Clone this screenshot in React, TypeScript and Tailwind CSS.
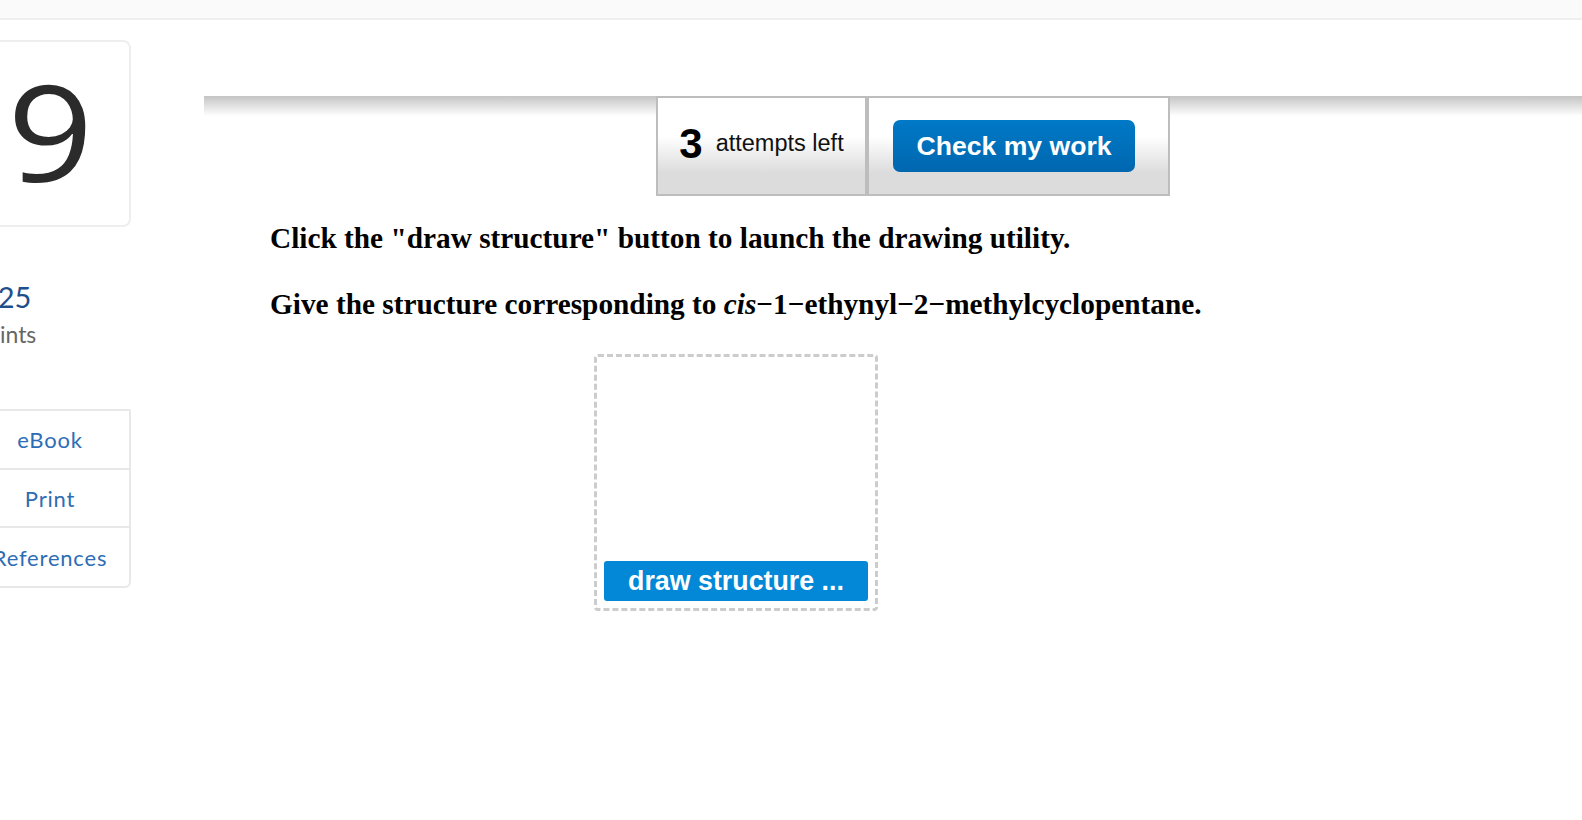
import React from "react";

export default function App() {
  return (
    <div className="relative w-full h-[820px] overflow-hidden bg-white">
      <div className="h-[20px] bg-[#fafafa] border-b-2 border-[#efefef]" />
      <div className="flex">
        {/* Sidebar */}
        <div className="ml-[-31px] w-[162px] shrink-0 pt-[20px] font-['Lato',sans-serif]">
          <div className="h-[187px] border-2 border-[#eeeeee] rounded-[8px] flex items-center justify-center pb-[8px]">
            <span className="inline-block scale-x-[1.12] text-[134px] leading-none text-[#2b2b2b] font-['Open_Sans',sans-serif]">9</span>
          </div>
          <div className="pl-[5px] mt-[54px]">
            <div className="text-[29px] leading-[32px] text-[#1d4f8c]">1.25</div>
            <div className="text-[23px] leading-[30px] text-[#666666] mt-[6px]">points</div>
          </div>
          <div className="mt-[60px] border-2 border-[#e8e8e8] rounded-b-[6px] rounded-t-[2px] text-[22px] tracking-[0.8px] text-[#2d6db5]">
            <div className="h-[59px] flex items-center justify-center border-b-2 border-[#e8e8e8]">eBook</div>
            <div className="h-[58px] flex items-center justify-center border-b-2 border-[#e8e8e8]">Print</div>
            <div className="h-[58px] flex items-center justify-center">References</div>
          </div>
        </div>

        {/* Main */}
        <div className="ml-[73px] flex-1 mt-[76px] bg-[linear-gradient(to_bottom,#c4c4c4_0px,#ffffff_20px)]">
          <div className="ml-[452px] flex h-[100px] w-[514px] font-['Liberation_Sans',Arial,sans-serif]">
            <div className="w-[211px] h-full border-2 border-[#bdbdbd] bg-[linear-gradient(to_bottom,#ffffff_40%,#dcdcdc_78%)] flex items-center justify-center gap-[13px] pb-[4px]">
              <span className="text-[42px] font-bold leading-none text-black">3</span>
              <span className="text-[23.5px] leading-none text-[#111111]">attempts left</span>
            </div>
            <div className="w-[303px] h-full border-2 border-[#bdbdbd] bg-[linear-gradient(to_bottom,#ffffff_40%,#dcdcdc_78%)] flex items-center pl-[24px]">
              <button className="w-[242px] h-[52px] rounded-[7px] bg-[linear-gradient(to_bottom,#0079c6,#0067b0)] text-white text-[26.6px] font-bold leading-none">
                Check my work
              </button>
            </div>
          </div>

          <div className="ml-[66px] mt-[26px] font-['Liberation_Serif','Times_New_Roman',serif] font-bold text-[29.3px] leading-[33px] text-black">
            <p>Click the "draw structure" button to launch the drawing utility.</p>
            <p className="mt-[33px]">
              Give the structure corresponding to <i>cis</i>−1−ethynyl−2−methylcyclopentane.
            </p>
          </div>

          <div className="ml-[390px] mt-[33px] w-[284px] h-[257px] border-[3px] border-dashed border-[#cccccc] rounded-[4px] flex flex-col justify-end p-[7px]">
            <button className="h-[40px] w-full rounded-[3px] bg-[#0288d6] text-white font-bold text-[26.8px] leading-none font-['Liberation_Sans',Arial,sans-serif]">
              draw structure ...
            </button>
          </div>
        </div>
      </div>
    </div>
  );
}
